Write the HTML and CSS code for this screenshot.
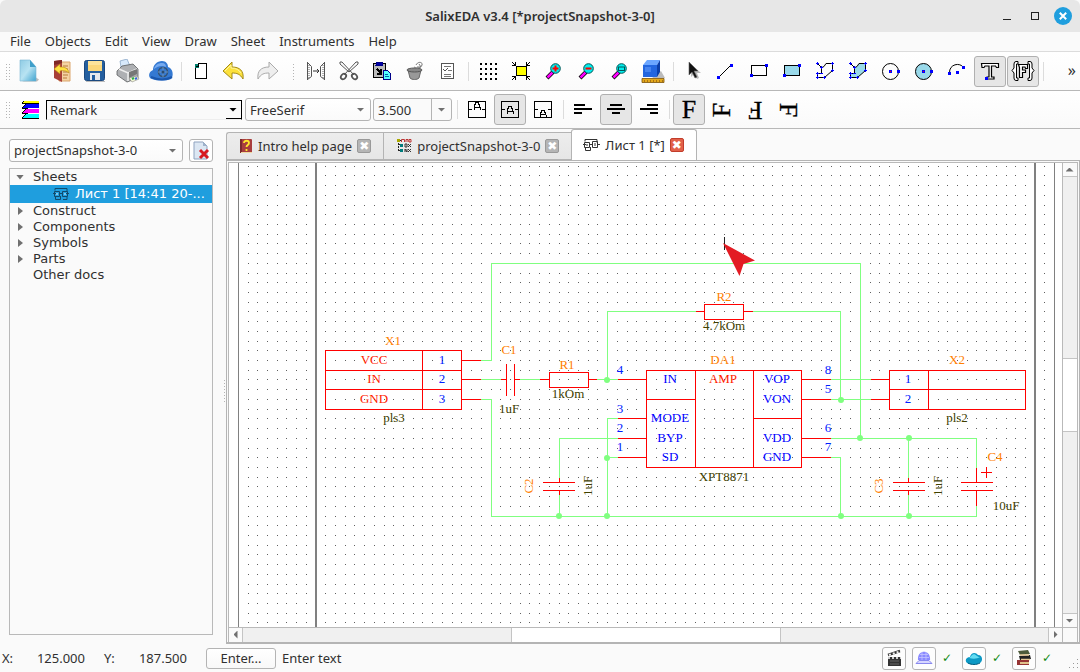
FILE: index.html
```html
<!DOCTYPE html>
<html lang="en">
<head>
<meta charset="utf-8">
<title>SalixEDA v3.4</title>
<link rel="stylesheet" href="styles.css">
</head>
<body>
<div class="window">
<header class="titlebar">
  <h1 class="title">SalixEDA v3.4 [*projectSnapshot-3-0]</h1>
  <div class="window-buttons">
    <button class="win-btn" aria-label="Minimize"><svg width="18" height="18"><path d="M5 12.500h8" stroke="#222" fill="none"/></svg></button>
    <button class="win-btn" aria-label="Maximize"><svg width="18" height="18"><rect x="5.500" y="5.500" width="7" height="7" stroke="#222" fill="none"/></svg></button>
    <button class="win-btn" aria-label="Close"><svg width="18" height="18"><circle cx="9" cy="9" r="9" fill="#1f9ede"/><path d="M5.800 5.800l6.400 6.400M12.200 5.800l-6.400 6.400" stroke="#fff" stroke-width="2"/></svg></button>
  </div>
</header>
<nav class="menubar">
  <button>File</button><button>Objects</button><button>Edit</button><button>View</button><button>Draw</button><button>Sheet</button><button>Instruments</button><button>Help</button>
</nav>

<div class="toolbar">
  <span class="handle"></span>
  <button class="tool" aria-label="New"><svg width="24" height="24"><defs><linearGradient id="np" x2="1" y2="1"><stop stop-color="#8ecbe4"/><stop offset=".5" stop-color="#b8e3f2"/><stop offset="1" stop-color="#3fa4d0"/></linearGradient></defs><path d="M5 22.500h15l2-2-3-2z" fill="#bbb"/><path d="M3 1h10l6 7v14H3z" fill="url(#np)" stroke="#7ab6d3" stroke-width=".6"/><path d="M13 1v7h6z" fill="#3f9fca"/></svg></button>
  <button class="tool" aria-label="Open"><svg width="24" height="24"><path d="M10 3h10v19H9z" fill="#f4d3a2" stroke="#dba56c"/><path d="M13 7h5M13 10h5M13 13h5M13 16h5M13 19h4" stroke="#b77a3c"/><path d="M4 2l8-1v22l-8-4z" fill="#a83f38"/><path d="M4 2l8-1v3l-8 2z" fill="#7f2925"/><path d="M4 10l6-5v3c5 0 8 1 9 6-2-2-5-3-9-2v3z" fill="#ffe243" stroke="#b88a10" stroke-width=".6"/></svg></button>
  <button class="tool" aria-label="Save"><svg width="24" height="24"><rect x="1.500" y="1.500" width="20" height="20" rx="2" fill="#245f9f" stroke="#1b497f"/><rect x="5" y="2" width="14" height="10" fill="#fbd77b"/><path d="M5 3h14M5 5h14" stroke="#fff0bc"/><rect x="7" y="14" width="10" height="7" fill="#e7e9ec"/><rect x="9" y="16" width="3" height="5" fill="#245f9f"/><path d="M3 22.500h19" stroke="#bbb"/></svg></button>
  <button class="tool" aria-label="Print"><svg width="24" height="24"><path d="M5 8L4 2l7-2 3 7z" fill="#d7e9fb" stroke="#7c9cc0" stroke-width=".7"/><path d="M1 12l5-5 11-2 5 5v9l-11 4-10-7z" fill="#aeb0b3" stroke="#5c5e60" stroke-width=".8"/><path d="M3 10l9 4 9-4M12 14v8" stroke="#eee" fill="none" stroke-width="1.500"/><path d="M13 13l8-3v5l-8 4z" fill="#777"/><path d="M13 19l8-2 2 3-7 3z" fill="#f5f9d8" stroke="#777" stroke-width=".5"/><path d="M16 20l2-1" stroke="#2cb048" stroke-width="2"/><path d="M19 20l2-1" stroke="#3661dd" stroke-width="2"/></svg></button>
  <button class="tool" aria-label="Cloud"><svg width="26" height="24"><path d="M4 20c-4-1-4-7 1-9 0-5 4-9 9-9 4 0 6 3 6 6 5 1 6 9 3 12-5 2-14 2-19 0z" fill="#3479d2"/><path d="M6 10c1-4 4-6 8-6 3 0 4 2 4 4-4-2-8-1-12 2z" fill="#75aaf0"/><path d="M3 18c7 3 15 3 21 0" stroke="#1b57ac" stroke-width="2" fill="none"/><circle cx="15" cy="13" r="4.500" fill="none" stroke="#355273" stroke-width="1.500"/><path d="M15 8v10M10 13h10" stroke="#6f93b8"/><circle cx="15" cy="13" r="1.500" fill="#284b72"/></svg></button>
  <span class="sep"></span>
  <button class="tool" aria-label="New sheet"><svg class="crisp" width="20" height="20"><path d="M7.500 2.500h8v15H4.500V5.500z" fill="#fff" stroke="#000"/><path d="M4 3h4v4H4z" fill="#00806f"/><path d="M7.500 2.500v3h-3" fill="none" stroke="#000"/></svg></button>
  <button class="tool" aria-label="Undo"><svg width="24" height="22"><path d="M1 11l9-9v5c8 0 12 4 11 12-3-5-6-6-11-6v6z" fill="#fce13c" stroke="#a38a16"/><path d="M3 11l6-6v3c5 0 8 2 10 5" stroke="#fff5a0" fill="none"/></svg></button>
  <button class="tool" aria-label="Redo"><svg width="24" height="22"><path d="M23 11l-9-9v5c-8 0-12 4-11 12 3-5 6-6 11-6v6z" fill="#eee" stroke="#aaa"/></svg></button>
  <span class="handle wide"></span>
  <button class="tool" aria-label="Spread"><svg width="20" height="20"><path d="M1.500 1v18M1.500 1.500l4 4v10l-4 3M18.500 1v18M18.500 1.500l-4 4v10l4 3" fill="none" stroke="#555"/><path d="M3 4v13M17 4v13" stroke="#666" stroke-dasharray="1 1"/><path d="M7 10h6M11 8l2 2-2 2" fill="none" stroke="#333"/></svg></button>
  <button class="tool" aria-label="Cut"><svg width="20" height="20"><path d="M1 1h2l12 13M19 1h-2L5 14M1 1v2l9 8M19 1v2l-9 8" stroke="#555" fill="none"/><ellipse cx="4.500" cy="15.500" rx="3" ry="2.300" transform="rotate(-50 4.500 15.500)" fill="none" stroke="#555" stroke-width="1.800"/><ellipse cx="15.500" cy="15.500" rx="3" ry="2.300" transform="rotate(50 15.500 15.500)" fill="none" stroke="#555" stroke-width="1.800"/></svg></button>
  <button class="tool" aria-label="Paste"><svg class="crisp" width="20" height="20"><path d="M1.500 2.500h12v14H1.500z" fill="#bbb" stroke="#000"/><path d="M5 1h5v3H4z" fill="#00a" stroke="#008"/><path d="M5 8l4 4M9 8v5H5" fill="none" stroke="#000" stroke-width="1.500"/><path d="M11.500 9.500h4l3 3v6h-7z" fill="#5ff" stroke="#008"/><path d="M13 13.500h3M13 15.500h4" stroke="#06a"/></svg></button>
  <button class="tool" aria-label="Recycle"><svg width="20" height="20"><path d="M3 9h13l-2 8c-2 2-7 2-9 0z" fill="#999" stroke="#666"/><ellipse cx="9.500" cy="9" rx="7.500" ry="2" fill="#888" stroke="#555"/><path d="M9 6c3 2 7 1 8-2M11 4c2-4 7-3 6 0M12 6h4l-2-3" stroke="#777" fill="none"/></svg></button>
  <button class="tool" aria-label="Properties"><svg class="crisp" width="20" height="20"><path d="M3.500 2.500h12v15h-12z" fill="#fff" stroke="#555"/><path d="M6 5.500h7M10 9.500h4M6 13.500h7M6 15.500h7" stroke="#777"/><path d="M5 8l2 2 3-3" fill="none" stroke="#555"/></svg></button>
  <span class="sep"></span>
  <button class="tool" aria-label="Grid"><svg class="crisp" width="20" height="20"><path d="M2 3h18M2 8h18M2 13h18M2 18h18" stroke="#000" stroke-width="2" stroke-dasharray="2 3"/></svg></button>
  <button class="tool" aria-label="Fit"><svg class="crisp" width="20" height="20"><rect x="5.500" y="5.500" width="10" height="9" fill="#ff0" stroke="#000"/><path d="M1 1l3 3M19 1l-3 3M1 19l3-3M19 19l-3-3M4.500 1v3.500H1M15.500 1v3.500H19M4.500 19v-3.500H1M15.500 19v-3.500H19" stroke="#000" fill="none"/></svg></button>
  <button class="tool" aria-label="Zoom in"><svg width="20" height="20"><path d="M3 17l6-6" stroke="#000" stroke-width="4"/><path d="M3.500 16.500l5-5" stroke="#f0f" stroke-width="2.500"/><circle cx="11.500" cy="7.500" r="4.800" fill="#0ee" stroke="#055"/><path d="M8.500 7.500h6M11.500 4.500v6" stroke="#f00" stroke-width="2"/></svg></button>
  <button class="tool" aria-label="Zoom out"><svg width="20" height="20"><path d="M3 17l6-6" stroke="#000" stroke-width="4"/><path d="M3.500 16.500l5-5" stroke="#f0f" stroke-width="2.500"/><circle cx="11.500" cy="7.500" r="4.800" fill="#0ee" stroke="#055"/><path d="M8.500 7.500h6" stroke="#f00" stroke-width="2"/></svg></button>
  <button class="tool" aria-label="Zoom window"><svg width="20" height="20"><path d="M3 17l6-6" stroke="#000" stroke-width="4"/><path d="M3.500 16.500l5-5" stroke="#f0f" stroke-width="2.500"/><circle cx="11.500" cy="7.500" r="4.800" fill="#0ee" stroke="#055"/><rect x="8.500" y="6" width="6" height="3.500" fill="none" stroke="#055"/></svg></button>
  <button class="tool" aria-label="3D"><svg width="26" height="26"><path d="M12 20h13l-4-7z" fill="#bbb"/><path d="M3 7l4-5h13l-3 5z" fill="#6ba6ff"/><path d="M3 7h14v12H3z" fill="#2366df"/><path d="M17 7l3-5v12l-3 5z" fill="#0c3fa8"/><path d="M5 9h6v5H5z" fill="#4583ef"/><path d="M2 20.500h22v4H2z" fill="#e5a91b" stroke="#7b5207" stroke-width=".8"/><path d="M4 23h19" stroke="#a87414" stroke-width="2" stroke-dasharray="1 2"/></svg></button>
  <span class="sep"></span>
  <button class="tool" aria-label="Select"><svg width="20" height="20"><path d="M8 3v13l3-3 3 5 2-1-2-5h4z" fill="#bbb"/><path d="M6 1v13l3-3 3 6 2-1-3-6h4z" fill="#111" stroke="#666" stroke-width=".6"/></svg></button>
  <button class="tool" aria-label="Line"><svg class="crisp" width="20" height="20"><path d="M3 16L15 4" stroke="#000"/><path d="M1 15h3v3H1zM14 3h3v3h-3z" fill="#00f"/></svg></button>
  <button class="tool" aria-label="Rectangle"><svg class="crisp" width="20" height="20"><path d="M2.500 4.500h15v10h-15z" fill="none" stroke="#000"/><path d="M1 13h3v3H1zM16 3h3v3h-3z" fill="#00f"/></svg></button>
  <button class="tool" aria-label="Filled rectangle"><svg class="crisp" width="20" height="20"><path d="M2.500 4.500h15v10h-15z" fill="#99d9ea" stroke="#000"/><path d="M1 13h3v3H1zM16 3h3v3h-3z" fill="#00f"/></svg></button>
  <button class="tool" aria-label="Polygon"><svg width="20" height="20"><path d="M2.500 2.500l4 4v6h-4v4h7l8-7v-7H11q-2 4-4 4" fill="none" stroke="#000"/><path d="M1 2.500h3M5 6.500h3M5 12.500h3M1 12.500h3M1 16.500h3M8 16.500h3M16 9.500h3M16 2.500h3M2.500 1v3M6.500 5v3M2.500 11v3M2.500 15v3M9.500 15v3M17.500 8v3M17.500 1v3" stroke="#00f"/></svg></button>
  <button class="tool" aria-label="Filled polygon"><svg width="20" height="20"><path d="M2.500 2.500l4 4v6h-4v4h7l8-7v-7H11q-2 4-4 4" fill="#99d9ea" stroke="#000"/><path d="M1 2.500h3M5 6.500h3M5 12.500h3M1 12.500h3M1 16.500h3M8 16.500h3M16 9.500h3M16 2.500h3M2.500 1v3M6.500 5v3M2.500 11v3M2.500 15v3M9.500 15v3M17.500 8v3M17.500 1v3" stroke="#00f"/></svg></button>
  <button class="tool" aria-label="Circle"><svg width="20" height="20"><circle cx="9.500" cy="10.500" r="8" fill="none" stroke="#000"/><path d="M8 9h3v3H8zM16 9h3v3h-3z" fill="#00f"/><path d="M9 10h1v1H9z" fill="#f00"/></svg></button>
  <button class="tool" aria-label="Filled circle"><svg width="20" height="20"><circle cx="9.500" cy="10.500" r="8" fill="#99d9ea" stroke="#000"/><path d="M8 9h3v3H8zM16 9h3v3h-3z" fill="#00f"/><path d="M9 10h1v1H9z" fill="#f00"/></svg></button>
  <button class="tool" aria-label="Arc"><svg width="20" height="20"><path d="M2.500 12C2 3 13 1 16.500 6.500" fill="none" stroke="#000"/><path d="M1 11h3v3H1zM9 10h3v3H9zM15 5h3v3h-3z" fill="#00f"/></svg></button>
  <button class="tool active" aria-label="Text"><svg width="20" height="20"><path d="M1.500 2.500h17v4h-2l-1-1.500h-4v11h2.500v2h-7v-2h2v-11h-4l-1 1.500h-2z" fill="#fff" stroke="#000" stroke-width="1.200"/><path d="M5 16h3v3H5z" fill="#00f"/></svg></button>
  <button class="tool active" aria-label="Parameter"><svg width="26" height="22"><path d="M8 1.500H6Q4 1.500 4 4v4l-2 2.500L4 13v5q0 2.500 2 2.500h2v-2.500H6.500v-14H8zM18 1.500h2q2 0 2 2.500v4l2 2.500-2 2.500v5q0 2.500-2 2.500h-2v-2.500h1.500v-14H18z" fill="#fff" stroke="#000"/><path d="M8.500 4.500h9v4h-2l-.5-1.500h-2.500v3h3v2.500h-3v5h-3v-10z" fill="#fff" stroke="#000" stroke-width="1.200"/></svg></button>
  <span class="sep"></span>
  <button class="more" aria-label="More">»</button>
</div>

<div class="toolbar second">
  <span class="handle"></span>
  <button class="tool layers" aria-label="Layers"><svg class="crisp" width="20" height="20"><path d="M4 1h15v2H2z" fill="#ff0"/><path d="M6 4h13v4H2z" fill="#00f"/><path d="M6 9h13v4H2z" fill="#f0f"/><path d="M6 14h13v4H2z" fill="#0ff"/><path d="M2 3.500h17M2 8.500h6M2 13.500h6M2 18.500h17M4 1L2 3M6 4L2 8M6 9l-4 4M6 14l-4 4" stroke="#000"/></svg></button>
  <div class="combo classic"><select aria-label="Layer"><option>Remark</option></select></div>
  <div class="combo font"><select aria-label="Font"><option>FreeSerif</option></select></div>
  <div class="combo size"><select aria-label="Text size"><option>3.500</option></select></div>
  <span class="sep"></span>
  <button class="tool" aria-label="Align top"><svg class="crisp" width="20" height="20"><path d="M1.500 1.500h17v16h-17zM1 9.500h4M15 9.500h4" fill="none" stroke="#000"/><path d="M7 10V7l2-5h2l2 5v3M7 7.500h6" fill="none" stroke="#000"/></svg></button>
  <button class="tool active" aria-label="Align middle"><svg class="crisp" width="20" height="20"><path d="M1.500 1.500h17v16h-17zM1 9.500h4M15 9.500h4" fill="none" stroke="#000"/><path d="M7 14v-3l2-5h2l2 5v3M7 11.500h6" fill="none" stroke="#000"/></svg></button>
  <button class="tool" aria-label="Align bottom"><svg class="crisp" width="20" height="20"><path d="M1.500 1.500h17v16h-17zM1 9.500h4M15 9.500h4" fill="none" stroke="#000"/><path d="M7 17v-2l2-5h2l2 5v2M7 14.500h6" fill="none" stroke="#000"/></svg></button>
  <span class="sep"></span>
  <button class="tool" aria-label="Align left"><svg class="crisp" width="20" height="20"><path d="M1 5h11M1 9h18M1 13h8" stroke="#000" stroke-width="2"/></svg></button>
  <button class="tool active" aria-label="Align center"><svg class="crisp" width="20" height="20"><path d="M4 5h12M1 9h18M6 13h8" stroke="#000" stroke-width="2"/></svg></button>
  <button class="tool" aria-label="Align right"><svg class="crisp" width="20" height="20"><path d="M8 5h11M1 9h18M11 13h8" stroke="#000" stroke-width="2"/></svg></button>
  <span class="sep"></span>
  <button class="tool active letter"><span>F</span></button>
  <button class="tool letter"><span class="r270">F</span></button>
  <button class="tool letter"><span class="r180">F</span></button>
  <button class="tool letter"><span class="r90">F</span></button>
</div>

<main class="body">
  <aside class="side">
    <div class="project">
      <div class="combo"><select aria-label="Project"><option>projectSnapshot-3-0</option></select></div>
      <button class="close-project" aria-label="Close project"><svg width="20" height="20"><path d="M3 1h9l4 4v13H3z" fill="#dce7f3" stroke="#8fa3bf"/><path d="M12 1v4h4z" fill="#9fb3cc"/><path d="M9 9l8 8M17 9l-8 8" stroke="#d71920" stroke-width="3"/></svg></button>
    </div>
    <ul class="tree">
      <li><i class="open"></i>Sheets
      <li class="selected"><svg width="18" height="14"><g fill="none" stroke="#124a6b"><path d="M3 3.500V1.500h12v3M1 6.500h3M8 6.500h3M14 6.500h3M3.500 10v2.500h5V9M11 12.500h4V10"/><path d="M2.500 4.500h5v5h-5zM10.500 4.500h5v5h-5z"/><path d="M5 6v2M13 6v2" stroke="#d7efff"/></g></svg><span>Лист 1 [14:41 20-...</span>
      <li><i></i>Construct
      <li><i></i>Components
      <li><i></i>Symbols
      <li><i></i>Parts
      <li class="leaf">Other docs
    </ul>
  </aside>
  <div class="splitter"></div>
  <section class="editor">
    <div class="tabs" role="tablist">
      <div class="tab" role="tab"><svg width="14" height="16"><rect x="1" y="1" width="12" height="14" rx="1" fill="#a83e3e"/><path d="M1 1h2v14H1z" fill="#7a2a2d"/><path d="M2 14.500h11" stroke="#eed8a0"/><path d="M5 5c0-3 5-3 5 0 0 2-2.500 2-2.500 4M7.500 11v2" fill="none" stroke="#ffe62e" stroke-width="1.800"/></svg><span>Intro help page</span><button class="tab-close" aria-label="Close tab">✖</button></div>
      <div class="tab" role="tab"><svg width="16" height="16"><path d="M2.500 2v11M2 6.500h4M2 12.500h4M4 2.500h3" stroke="#222" stroke-dasharray="2 1"/><path d="M1 1h3v3H1z" fill="#aaa800"/><path d="M4 6h3v3H4zM4 11h3v3H4z" fill="#007c7c"/><path d="M5.500 4V1.500h3V4M10 4V1.500h2V4M13 1.500h2V4h-2z" fill="none" stroke="#b33"/><path d="M9 6h2v3H9zM12 6l3 3M15 6l-3 3M9 14v-3l2 3v-3M12 11l3 3M15 11l-3 3" fill="none" stroke="#333"/></svg><span>projectSnapshot-3-0</span><button class="tab-close" aria-label="Close tab">✖</button></div>
      <div class="tab current" role="tab" aria-selected="true"><svg width="18" height="14"><g fill="none" stroke="#333"><path d="M3 3.500V1.500h12v3M1 6.500h3M8 6.500h3M15 6.500h3M3.500 10v2.500h5V9"/><path d="M2.500 4.500h5v5h-5zM10.500 3.500h5v6h-5zM5 6v2M13 5v3"/></g></svg><span>Лист 1 [*]</span><button class="tab-close red" aria-label="Close tab">✖</button></div>
    </div>
    <div class="pane">
      <div class="view">
        <div class="sheet">
          <svg class="drawing" width="100%" height="100%">
            <g transform="translate(-229 -163)">
              <path id="grid" fill="#606060" shape-rendering="crispEdges"/>
              <g stroke="#808080" shape-rendering="crispEdges"><path d="M238.500 0v2000M1054.500 0v2000"/><path d="M316 0v2000M1035 0v2000" stroke-width="2"/></g>
              <path class="wire" d="M481 360.500h10.500v-97h369v175M481 399.500h10.500v117h485v-11M481 379.500h21M520 379.500h20M597 379.500h21M607.500 379v-68h89M753 311.500h87.500v88M618 418.500h-10.500v98M618 438.500h-58.500v40M559.500 495v21M607 457.500h11M831 379.500h40M831 399.500h40M831 438.500h145.500v30M831 457.500h9.500v59M908.500 438v41M908.500 495v21"/>
              <g fill="#80ff80"><circle cx="607" cy="380" r="3"/><circle cx="607" cy="458" r="3"/><circle cx="607" cy="516" r="3"/><circle cx="559" cy="516" r="3"/><circle cx="841" cy="400" r="3"/><circle cx="860" cy="438" r="3"/><circle cx="909" cy="438" r="3"/><circle cx="909" cy="516" r="3"/><circle cx="841" cy="516" r="3"/></g>
              <path class="part" d="M325.500 350.500h136v59h-136zM325 370.500h136M325 389.500h136M422.500 350v59M461 360.500h20M461 379.500h20M461 399.500h20
                M501 379.500h5M506.500 364v32M514.500 364v32M515 379.500h5M540 379.500h9M549.500 372.500h39v15h-39zM589 379.500h8
                M696 311.500h8M704.500 304.500h39v15h-39zM744 311.500h9
                M646.500 370.500h155v97h-155zM695.500 370v97M753.500 370v97M646 399.500h49M753 418.500h48M618 379.500h28M618 418.500h28M618 438.500h28M618 457.500h28M802 379.500h29M802 399.500h29M802 438.500h29M802 457.500h29
                M543 482.500h32M543 490.500h32M559.500 478v4M559.500 491v4M893 482.500h32M893 490.500h32M908.500 478v4M908.500 491v4M961 482.500h32M961 490.500h32M976.500 468v14M976.500 491v15M981 472.500h11M986.500 467v11
                M889.500 370.500h136v39h-136zM889 389.500h136M928.500 370v39M871 379.500h18M871 399.500h18"/>
              <g class="name"><text x="393" y="345">X1</text><text x="509" y="354">C1</text><text x="567" y="369">R1</text><text x="724" y="301">R2</text><text x="723" y="364">DA1</text><text x="957" y="364">X2</text><text x="995" y="461">C4</text><text transform="translate(533 486) rotate(-90)">C2</text><text transform="translate(883 486) rotate(-90)">C3</text></g>
              <g class="value"><text x="394" y="422">pls3</text><text x="509" y="413">1uF</text><text x="568" y="398">1kOm</text><text x="724" y="330">4.7kOm</text><text x="724" y="481">XPT8871</text><text x="957" y="422">pls2</text><text x="1006" y="510">10uF</text><text transform="translate(592 486) rotate(-90)">1uF</text><text transform="translate(942 486) rotate(-90)">1uF</text></g>
              <g class="signal"><text x="374" y="364">VCC</text><text x="374" y="383">IN</text><text x="374" y="403">GND</text><text x="723" y="383">AMP</text></g>
              <g class="pin"><text x="442" y="364">1</text><text x="442" y="383">2</text><text x="442" y="403">3</text><text x="908" y="383">1</text><text x="908" y="403">2</text><text x="620" y="374">4</text><text x="620" y="413">3</text><text x="620" y="432">2</text><text x="620" y="451">1</text><text x="828" y="374">8</text><text x="828" y="393">5</text><text x="828" y="432">6</text><text x="828" y="451">7</text></g>
              <g class="port"><text x="670" y="383">IN</text><text x="670" y="422">MODE</text><text x="670" y="442">BYP</text><text x="670" y="461">SD</text><text x="777" y="383">VOP</text><text x="777" y="403">VON</text><text x="777" y="442">VDD</text><text x="777" y="461">GND</text></g>
              <path d="M724.500 237v13" stroke="#222"/>
              <path d="M723 243l32 17.500-11.500 3.500-4 12z" fill="#e31b23"/>
            </g>
          </svg>
        </div>
        <div class="vbar"><button class="arrow up" aria-label="Scroll up"></button><div class="track"><div class="thumb"></div></div><button class="arrow down" aria-label="Scroll down"></button></div>
        <div class="hbar"><button class="arrow left" aria-label="Scroll left"></button><div class="track"><div class="thumb"></div></div><button class="arrow right" aria-label="Scroll right"></button></div>
        <div class="corner"></div>
      </div>
    </div>
  </section>
</main>

<footer class="status">
  <span class="axis">X:</span><output class="coord">125.000</output>
  <span class="axis y">Y:</span><output class="coord">187.500</output>
  <button class="enter">Enter...</button><span class="hint">Enter text</span>
  <div class="indicators">
    <button class="ind" aria-label="Record"><svg width="16" height="18"><path d="M2 8h13v9H2z" fill="#333"/><path d="M2 6l12-4" stroke="#333" stroke-width="2.500"/><path d="M3 6l12-4" stroke="#eee" stroke-width="2" stroke-dasharray="2 2"/><path d="M2 9h13" stroke="#ccc" stroke-width="2" stroke-dasharray="2 2"/><path d="M4 12h9M4 15h9" stroke="#666"/></svg></button>
    <button class="ind" aria-label="Server"><svg width="18" height="16"><path d="M3 10c-1-11 13-11 12 0z" fill="#88f"/><path d="M5 4.500h8M4 7.500h10M7 2v9M11 2v9" stroke="#c4c4ff" stroke-width=".8"/><path d="M4 10.500h10l3 3H1z" fill="#d6d6ff" stroke="#88e"/></svg></button><span class="tick">✓</span>
    <button class="ind" aria-label="Cloud status"><svg width="18" height="16"><path d="M2 13c-3-3 0-6 3-6 1-5 6-5 8-2 5 0 5 6 2 8-4 2-9 2-13 0z" fill="#0c98c4"/><path d="M4 8c3-2 2-3 5-4 3 1 3 3 6 3-3 2-7 2-11 1z" fill="#62dcf2"/><path d="M3 13c4 2 8 2 12 0" stroke="#075b7d" fill="none"/></svg></button><span class="tick">✓</span>
    <button class="ind" aria-label="Library"><svg width="18" height="17"><path d="M3 1l10-1 2 4-10 1z" fill="#4d5b3a"/><path d="M4 6l11-1 1 4-11 1z" fill="#222"/><path d="M5 5h9M6 9.500h9" stroke="#e5c893" stroke-width="1.500"/><path d="M2 10h12v5H2z" fill="#963333"/><path d="M5 12h9v2H5z" fill="#e0c18a"/></svg></button><span class="tick">✓</span>
    <svg class="grip crisp" width="14" height="14"><path d="M11 1h1v1h-1zM7 5h1v1H7zM11 5h1v1h-1zM3 9h1v1H3zM7 9h1v1H7zM11 9h1v1h-1z" fill="#999"/></svg>
  </div>
</footer>
</div>
<script src="grid.js"></script>
</body>
</html>
```

FILE: grid.js
```js
// Draws the snap grid of the sheet, one whole pixel per node.
const PITCH = 9.718;
const ORIGIN = { x: 248.05, y: 166.2 };
let d = "";
for (let row = 0; row < 180; row++) {
  for (let col = 0; col < 83; col++) {
    d += `M${Math.floor(ORIGIN.x + col * PITCH)} ${Math.floor(ORIGIN.y + row * PITCH)}h1v1h-1z`;
  }
}
document.getElementById("grid").setAttribute("d", d);
```

FILE: styles.css
```css
* { box-sizing: border-box; }
body { margin: 0; font: 13px/16px "Noto Sans", sans-serif; color: #303030; background: #fafafa; }
button, select { font: inherit; color: inherit; margin: 0; padding: 0; border: 0; background: none; }
svg { display: block; flex: none; }
.crisp { shape-rendering: crispEdges; }
.window { display: flex; flex-direction: column; height: 100vh; background: #fafafa; overflow: hidden; }

.titlebar { display: grid; grid-template-columns: 1fr auto 1fr; align-items: center; height: 32px; flex: none; background: #e7e7e7; border-radius: 6px 6px 0 0; }
.title { grid-column: 2; margin: 0; font-size: 13px; font-weight: 600; }
.window-buttons { display: flex; justify-content: flex-end; gap: 10px; padding-right: 8px; }
.win-btn { width: 18px; height: 18px; }

.menubar { display: flex; flex: none; height: 20px; padding: 0 0 2px 3px; border-bottom: 1px solid #dcdcdc; }
.menubar button { padding: 0 7px; }

.toolbar { display: flex; flex: none; align-items: center; gap: 1px; height: 39px; background: linear-gradient(#fff, #fafafa); border-bottom: 1px solid #b8b8b8; }
.toolbar.second { height: 38px; }
.tool { width: 32px; height: 31px; flex: none; display: flex; align-items: center; justify-content: center; border: 1px solid transparent; border-radius: 3px; }
.tool.active { background: #e6e6e6; border-color: #b0b0b0; }
.sep { width: 6px; height: 19px; flex: none; background: linear-gradient(#dcdcdc, #dcdcdc) 3px 0 / 1px 100% no-repeat; }
.handle { width: 12px; height: 17px; flex: none; background: radial-gradient(circle, #b4b4b4 1px, transparent 1px) 5px 0 / 3px 3px repeat; background-clip: content-box; padding: 0 2px 0 5px; }
.handle.wide { width: 15px; padding: 0 3px 0 7px; }
.more { margin-left: auto; padding: 0 4px 3px 0; font-size: 16px; }
.layers { padding-left: 2px; }
.letter { font: 26px/26px "Liberation Serif", serif; color: #000; -webkit-text-stroke: 0.3px #000; }
.letter span { display: block; }
.r270 { transform: rotate(-90deg); }
.r180 { transform: rotate(180deg); }
.r90 { transform: rotate(90deg); }

.combo { display: grid; grid-template: 1fr / 1fr 21px; height: 23px; align-items: center; }
.combo select { grid-area: 1 / 1 / 2 / 3; height: 100%; width: 100%; padding-left: 4px; appearance: none; border: 1px solid #b4b4b4; border-radius: 3px; background: linear-gradient(#fff, #fafafa); }
.combo::after { content: ""; grid-area: 1 / 2; justify-self: center; width: 8px; height: 4px; background: #707070; clip-path: polygon(0 0, 100% 0, 50% 100%); pointer-events: none; }
.combo.classic { width: 196px; height: 20px; grid-template-columns: 1fr 18px; }
.combo.classic select { padding-left: 3px; border: 1px solid #000; border-bottom-color: #eee; border-radius: 0; background: linear-gradient(#000, #000) 100% 100% / 15px 1px no-repeat, #fafafa; }
.combo.classic::after { background: #000; }
.combo.font { width: 126px; margin-left: 2px; }
.combo.size { width: 79px; margin: 0 1px; }
.combo.size select { background: linear-gradient(#b4b4b4, #b4b4b4) calc(100% - 19px) 0 / 1px 100% no-repeat, #fafafa; }

.body { display: flex; flex: 1; min-height: 0; }
.side { width: 213px; flex: none; display: flex; flex-direction: column; gap: 6px; padding: 10px 0 9px 9px; }
.project { display: flex; gap: 6px; }
.project .combo { flex: 1; }
.project select { padding-bottom: 2px; }
.close-project { width: 24px; height: 23px; display: grid; place-items: center; border: 1px solid #b4b4b4; border-radius: 3px; background: #fff; }
.tree { flex: 1; margin: 0; padding: 0; list-style: none; border: 1px solid #b9b9b9; font: 13px/16px "DejaVu Sans", sans-serif; }
.tree li { display: flex; align-items: center; height: 16px; white-space: nowrap; overflow: hidden; }
.tree i { width: 5px; height: 8px; margin: 0 10px 0 8px; background: #707070; clip-path: polygon(0 0, 100% 50%, 0 100%); }
.tree i.open { width: 8px; height: 5px; margin: 0 9px 0 6px; clip-path: polygon(0 0, 100% 0, 50% 100%); }
.tree .leaf { padding-left: 23px; }
.tree .selected { height: 18px; padding-left: 42px; gap: 5px; background: #1f9ede; color: #fff; }
.splitter { width: 13px; flex: none; background: radial-gradient(circle, #b4b4b4 1px, transparent 1px) 10px 50% / 3px 3px; background-clip: content-box; padding: 250px 1px 240px 10px; }

.editor { flex: 1; min-width: 0; display: flex; flex-direction: column; }
.tabs { display: flex; align-items: flex-end; height: 31px; flex: none; }
.tab { display: flex; align-items: center; height: 28px; padding: 0 12px; gap: 5px; background: linear-gradient(#ededed, #e6e6e6); border: 1px solid #b4b4b4; border-right: 0; white-space: nowrap; }
.tab:first-child { border-radius: 3px 0 0 0; }
.tab.current { height: 31px; background: #fff; border-right: 1px solid #b4b4b4; border-bottom: 0; border-radius: 3px 3px 0 0; padding: 0 12px 0 10px; }
.tab-close { width: 14px; height: 14px; font: 12px/12px "DejaVu Sans", sans-serif; color: #fff; background: #b5b5b5; border: 1px solid #999; border-radius: 2px; }
.tab-close.red { background: #e2604a; border-color: #c23d2b; }
.pane { flex: 1; min-height: 0; padding: 1px 1px 0; border: 1px solid #b4b4b4; border-bottom-width: 2px; }
.view { height: 100%; display: grid; grid-template: 1fr 15px / 1fr 15px; border: 1px solid #b9b9b9; border-bottom: 0; background: #fff; }
.sheet { min-width: 0; min-height: 0; overflow: hidden; }
.drawing { width: 100%; height: 100%; }
.wire { fill: none; stroke: #80ff80; shape-rendering: crispEdges; }
.part { fill: none; stroke: #f00; shape-rendering: crispEdges; }
.drawing text { font: 13px "Liberation Serif", serif; text-anchor: middle; }
.name { fill: #ff8000; }
.value { fill: #404000; }
.signal { fill: #f20; }
.pin { fill: #0020ff; }
.port { fill: #00f; }
.vbar, .hbar { display: flex; background: #fafafa; }
.vbar { flex-direction: column; border-left: 1px solid #b9b9b9; }
.hbar { border-top: 1px solid #b9b9b9; }
.track { flex: 1; display: flex; background: #f0f0f0; }
.vbar .track { flex-direction: column; border: 1px solid #c4c4c4; border-width: 1px 0; padding-top: 181px; }
.hbar .track { border: 1px solid #c4c4c4; border-width: 0 1px; padding-left: 268px; }
.thumb { background: #fff; border: 1px solid #c4c4c4; }
.vbar .thumb { height: 74px; border-width: 1px 0; }
.hbar .thumb { width: 270px; border-width: 0 1px; }
.corner { border: 1px solid #b9b9b9; border-width: 1px 0 0 1px; background: #fafafa; }
.arrow { flex: none; width: 13px; height: 13px; display: grid; place-items: center; }
.arrow::before { content: ""; width: 8px; height: 4px; background: #707070; }
.arrow.up::before { clip-path: polygon(50% 0, 100% 100%, 0 100%); }
.arrow.down::before { clip-path: polygon(0 0, 100% 0, 50% 100%); }
.arrow.left::before { width: 4px; height: 8px; clip-path: polygon(100% 0, 100% 100%, 0 50%); }
.arrow.right::before { width: 4px; height: 8px; clip-path: polygon(0 0, 100% 50%, 0 100%); }

.status { display: flex; align-items: center; flex: none; height: 28px; padding-left: 2px; }
.axis { width: 20px; }
.axis.y { margin-left: 19px; }
.coord { width: 63px; text-align: right; }
.enter { width: 70px; height: 21px; margin: 0 6px 0 19px; border: 1px solid #b4b4b4; border-radius: 3px; background: linear-gradient(#fff, #f8f8f8); }
.indicators { display: flex; align-items: center; gap: 6px; margin-left: auto; height: 28px; }
.ind { width: 24px; height: 23px; display: grid; place-items: center; border: 1px solid #b4b4b4; border-radius: 3px; background: #fdfdfd; }
.tick { width: 14px; font: bold 12px/16px "DejaVu Sans", sans-serif; color: #128a12; }
.grip { align-self: flex-end; margin-left: 4px; }
```
